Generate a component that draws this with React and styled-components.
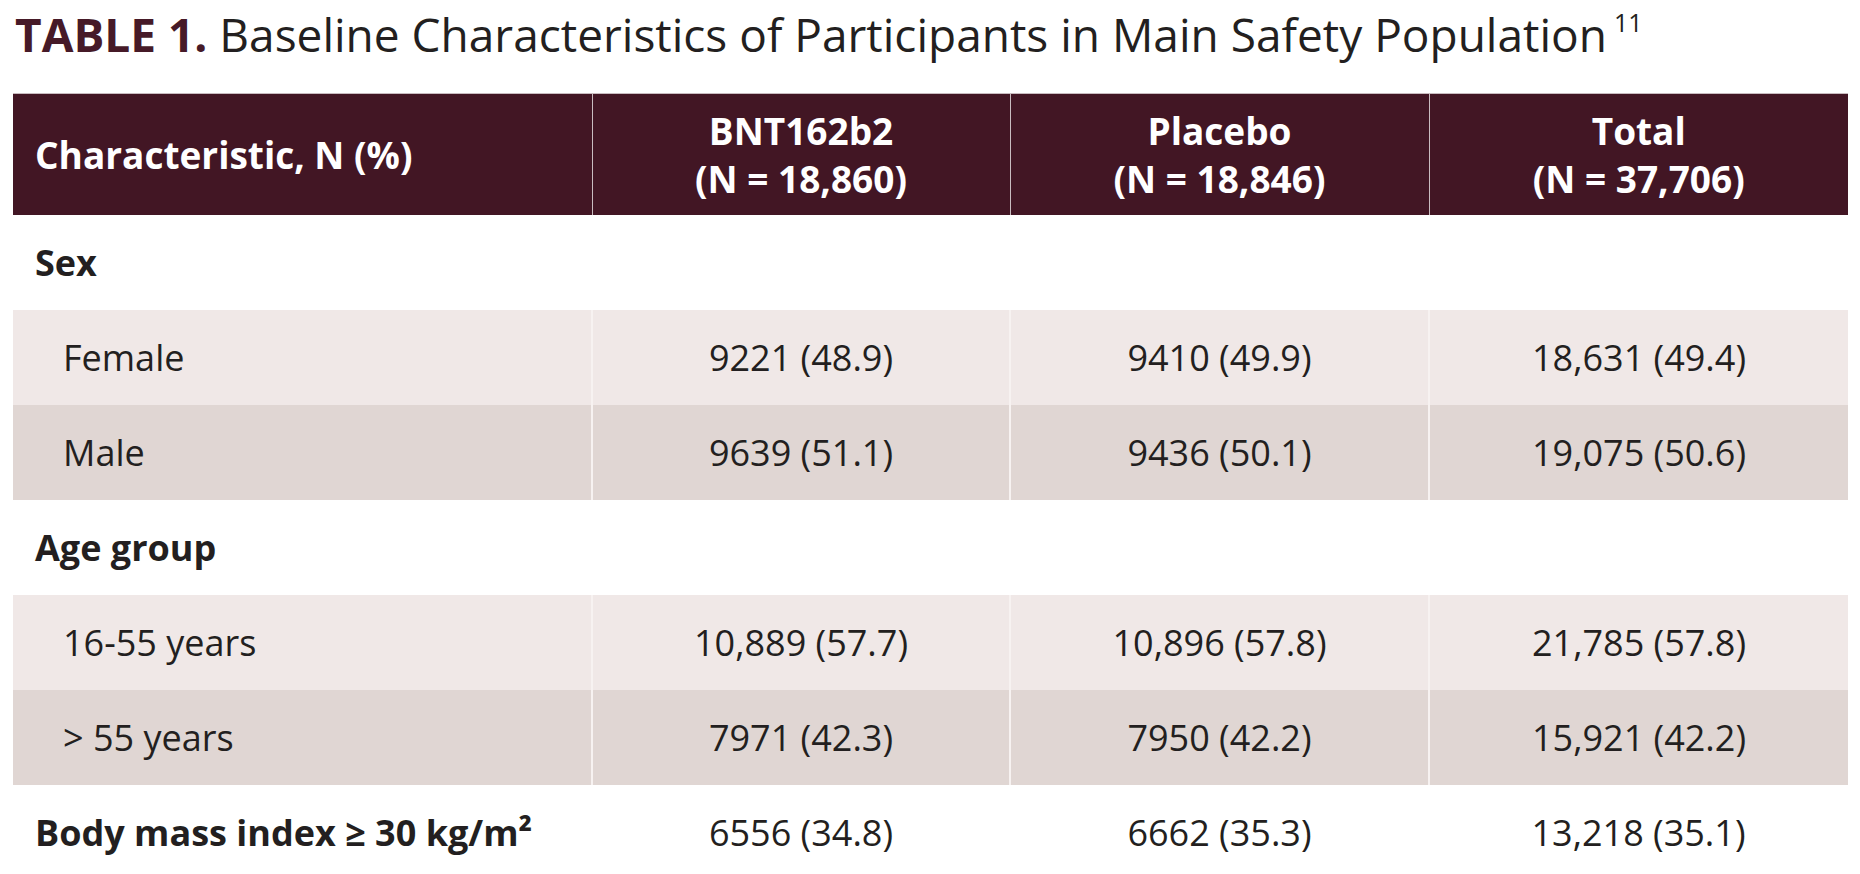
import React from 'react';
import styled, { createGlobalStyle } from 'styled-components';

const GlobalStyle = createGlobalStyle`
  html, body {
    margin: 0;
    padding: 0;
    background: #ffffff;
  }
  body {
    font-family: "Open Sans", "Noto Sans", sans-serif;
    color: #231f20;
  }
`;

const Page = styled.div`
  padding: 6px 12px 0 13px;
  width: 1860px;
  box-sizing: border-box;
`;

const Title = styled.h1`
  margin: 0 0 31px 2px;
  font-size: 46px;
  line-height: 56px;
  font-weight: 400;
  color: #231f20;
  white-space: nowrap;
`;

const TableNo = styled.span`
  font-weight: 700;
  color: #461a28;
`;

const Ref = styled.sup`
  font-size: 25px;
  vertical-align: 20px;
  line-height: 0;
  margin-left: 7px;
`;

const Table = styled.table`
  width: 1835px;
  border-collapse: collapse;
  table-layout: fixed;
`;

const HeadCell = styled.th`
  background: #421624;
  color: #ffffff;
  height: 121px;
  padding: 0 22px;
  font-size: 37px;
  line-height: 48px;
  font-weight: 700;
  text-align: ${p => (p.$left ? 'left' : 'center')};
  border-left: 1px solid #c9bcc0;
  border-top: 1px solid #c9bcc0;
  &:first-child {
    border-left: none;
  }
`;

const Row = styled.tr`
  background: ${p => (p.$tone === 'light' ? '#f0e8e7' : p.$tone === 'dark' ? '#e0d6d3' : '#ffffff')};
`;

const Cell = styled.td`
  height: 95px;
  padding: 0 22px 0 ${p => (p.$indent ? '50px' : '22px')};
  font-size: 36px;
  font-weight: ${p => (p.$bold ? 700 : 400)};
  text-align: ${p => (p.$left ? 'left' : 'center')};
  white-space: nowrap;
  border-left: ${p => (p.$shaded ? '2px solid #f7f2f1' : 'none')};
  &:first-child {
    border-left: none;
  }
`;

const rows = [
  { label: 'Sex', group: true },
  { label: 'Female', tone: 'light', values: ['9221 (48.9)', '9410 (49.9)', '18,631 (49.4)'] },
  { label: 'Male', tone: 'dark', values: ['9639 (51.1)', '9436 (50.1)', '19,075 (50.6)'] },
  { label: 'Age group', group: true },
  { label: '16-55 years', tone: 'light', values: ['10,889 (57.7)', '10,896 (57.8)', '21,785 (57.8)'] },
  { label: '> 55 years', tone: 'dark', values: ['7971 (42.3)', '7950 (42.2)', '15,921 (42.2)'] },
  { label: 'Body mass index ≥ 30 kg/m²', bold: true, values: ['6556 (34.8)', '6662 (35.3)', '13,218 (35.1)'] },
];

export default function App() {
  return (
    <Page>
      <GlobalStyle />
      <Title>
        <TableNo>TABLE 1.</TableNo> Baseline Characteristics of Participants in Main Safety Population<Ref>11</Ref>
      </Title>
      <Table>
        <colgroup>
          <col style={{ width: 579 }} />
          <col style={{ width: 418 }} />
          <col style={{ width: 419 }} />
          <col style={{ width: 419 }} />
        </colgroup>
        <thead>
          <tr>
            <HeadCell $left>Characteristic, N (%)</HeadCell>
            <HeadCell>BNT162b2<br />(N = 18,860)</HeadCell>
            <HeadCell>Placebo<br />(N = 18,846)</HeadCell>
            <HeadCell>Total<br />(N = 37,706)</HeadCell>
          </tr>
        </thead>
        <tbody>
          {rows.map(r => (
            <Row key={r.label} $tone={r.tone}>
              <Cell $left $bold={r.group || r.bold} $indent={!!r.tone}>{r.label}</Cell>
              {r.group ? (
                <Cell colSpan={3} />
              ) : (
                r.values.map((v, i) => (
                  <Cell key={i} $shaded={!!r.tone}>{v}</Cell>
                ))
              )}
            </Row>
          ))}
        </tbody>
      </Table>
    </Page>
  );
}
